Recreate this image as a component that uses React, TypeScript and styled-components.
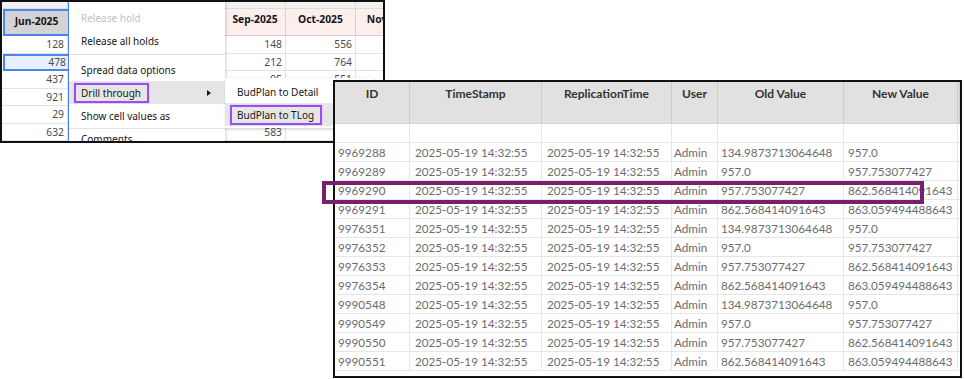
import React from 'react';
import styled, { createGlobalStyle, css } from 'styled-components';

const Global = createGlobalStyle`
  html, body { margin: 0; padding: 0; background: #fff; }
  body { width: 965px; height: 379px; overflow: hidden; }
`;

const Canvas = styled.div`
  position: relative;
  width: 965px;
  height: 379px;
  background: #fff;
  overflow: hidden;
`;

/* ---------- Spreadsheet window (top-left) ---------- */

const SheetWindow = styled.div`
  position: absolute;
  left: 0;
  top: 0;
  width: 385px;
  height: 143px;
  box-sizing: border-box;
  border: 2px solid #111;
  background: #fff;
  overflow: hidden;
  font-family: "Noto Sans", "Open Sans", sans-serif;
`;

const SheetGrid = styled.div`
  display: grid;
  grid-template-columns: 66px 157px 61px 70px 70px;
  grid-template-rows: 7px 27px repeat(6, 17.5px);
`;

const TopStrip = styled.div`
  background: #f1f1f1;
  border-right: 1px solid #dedede;
  border-bottom: 1px solid #dcdcdc;
  box-sizing: border-box;
`;

const HeaderCell = styled.div<{ $selected?: boolean }>`
  box-sizing: border-box;
  display: flex;
  justify-content: center;
  padding-top: 3px;
  font-size: 10.3px;
  font-weight: 700;
  color: #161616;
  white-space: nowrap;
  overflow: hidden;
  ${(p) =>
    p.$selected
      ? css`
          margin-left: 1px;
          background: #d3d3d3;
          border: 2px solid #4a84ee;
          border-right: none;
        `
      : css`
          background: #fdeeee;
          border-right: 1px solid #d6cfcf;
          border-bottom: 1px solid #d6cfcf;
        `}
`;

const NumCell = styled.div<{ $selected?: boolean }>`
  box-sizing: border-box;
  display: flex;
  align-items: center;
  justify-content: flex-end;
  padding-right: 3px;
  font-size: 10.3px;
  color: #4b4b4b;
  border-bottom: 1px solid #e3e3e3;
  border-right: 1px solid #e3e3e3;
  ${(p) =>
    p.$selected &&
    css`
      margin-left: 1px;
      padding-right: 2px;
      background: #e9f0fd;
      border: 2px solid #4a84ee;
      border-right: none;
    `}
`;

const SelectionBand = styled.div`
  grid-column: 2;
  grid-row: 1 / -1;
  border-left: 1px solid #4a84ee;
  border-right: 1px solid #4a84ee;
  box-sizing: border-box;
`;

const ContextMenu = styled.div`
  position: absolute;
  left: 67px;
  top: -2px;
  width: 156px;
  bottom: -20px;
  background: #fff;
  padding-top: 6px;
  box-sizing: border-box;
  box-shadow: 1px 0 3px rgba(0, 0, 0, 0.18);
  display: flex;
  flex-direction: column;
`;

const MenuItem = styled.div<{ $disabled?: boolean; $active?: boolean }>`
  height: 23px;
  flex: none;
  display: flex;
  align-items: center;
  justify-content: space-between;
  padding: 0 12px 0 12px;
  font-size: 10px;
  color: ${(p) => (p.$disabled ? '#c2c2c2' : '#161616')};
  background: ${(p) => (p.$active ? '#e6e6e6' : 'transparent')};
  white-space: nowrap;
`;

const MenuSeparator = styled.div<{ $tight?: boolean }>`
  height: 1px;
  flex: none;
  margin: ${(p) => (p.$tight ? '1px 0 -2px' : '2px 0 3px')};
  background: #e2e2e2;
`;

const Annotated = styled.span`
  margin-left: -7px;
  padding: 0 6px 0 5px;
  height: 16px;
  line-height: 16px;
  border: 2px solid #9a4cf5;
  box-shadow: 0 0 1px rgba(154, 76, 245, 0.5);
`;

const Arrow = styled.span`
  width: 0;
  height: 0;
  margin-right: 2px;
  border-top: 3px solid transparent;
  border-bottom: 3px solid transparent;
  border-left: 4px solid #161616;
`;

const SubMenu = styled.div`
  position: absolute;
  left: 223px;
  top: 76px;
  width: 148px;
  padding: 2px 0 2px;
  background: #fff;
  box-shadow: 1px 1px 3px rgba(0, 0, 0, 0.22);
  display: flex;
  flex-direction: column;
`;

/* ---------- Transaction log table (bottom-right) ---------- */

const TableWindow = styled.div`
  position: absolute;
  left: 333px;
  top: 80px;
  width: 629px;
  height: 298px;
  box-sizing: border-box;
  border: 2px solid #111;
  background: #fff;
  overflow: hidden;
  font-family: Lato, "Liberation Sans", sans-serif;
`;

const LogGrid = styled.div`
  display: grid;
  grid-template-columns: 75px 132px 130px 46px 126px 114px 2px;
  grid-template-rows: 42px 19px;
  grid-auto-rows: 19px;
`;

const LogHead = styled.div`
  box-sizing: border-box;
  background: #e1e1e1;
  border-right: 1px solid #cdcdcd;
  border-bottom: 1px solid #d4d4d4;
  padding-top: 4px;
  text-align: center;
  font-size: 12px;
  font-weight: 700;
  color: #333;
  white-space: nowrap;
`;

const LogCell = styled.div<{ $pad?: number }>`
  box-sizing: border-box;
  border-right: 1px solid #e6e6e6;
  border-bottom: 1px solid #e6e6e6;
  padding-left: ${(p) => p.$pad ?? 4}px;
  display: flex;
  align-items: center;
  font-size: 11.7px;
  color: #6c6c6c;
  white-space: nowrap;
  overflow: hidden;
`;

const RowHighlight = styled.div`
  position: absolute;
  left: 322px;
  top: 181px;
  width: 602px;
  height: 23px;
  box-sizing: border-box;
  border: 4px solid #78206e;
  pointer-events: none;
`;

const junValues = ['128', '478', '437', '921', '29', '632'];
const sepValues = ['148', '212', '95', '412', '318', '583'];
const octValues = ['556', '764', '551', '', '', ''];

const logColumns = ['ID', 'TimeStamp', 'ReplicationTime', 'User', 'Old Value', 'New Value'];
const pads = [3, 5, 5, 2, 3, 4];

const valuePairs: [string, string][] = [
  ['134.9873713064648', '957.0'],
  ['957.0', '957.753077427'],
  ['957.753077427', '862.568414091643'],
  ['862.568414091643', '863.059494488643'],
];

const ids = [
  '9969288', '9969289', '9969290', '9969291',
  '9976351', '9976352', '9976353', '9976354',
  '9990548', '9990549', '9990550', '9990551',
];

export default function App() {
  return (
    <>
      <Global />
      <Canvas>
        <SheetWindow>
          <SheetGrid>
            <TopStrip />
            <SelectionBand />
            <TopStrip />
            <TopStrip />
            <TopStrip />

            <HeaderCell $selected>Jun-2025</HeaderCell>
            <HeaderCell>Sep-2025</HeaderCell>
            <HeaderCell>Oct-2025</HeaderCell>
            <HeaderCell>Nov-2025</HeaderCell>

            {junValues.map((v, i) => (
              <React.Fragment key={i}>
                <NumCell $selected={i === 1}>{v}</NumCell>
                <NumCell>{sepValues[i]}</NumCell>
                <NumCell>{octValues[i]}</NumCell>
                <NumCell />
              </React.Fragment>
            ))}
          </SheetGrid>

          <ContextMenu>
            <MenuItem $disabled>Release hold</MenuItem>
            <MenuItem>Release all holds</MenuItem>
            <MenuSeparator />
            <MenuItem>Spread data options</MenuItem>
            <MenuItem $active>
              <Annotated>Drill through</Annotated>
              <Arrow />
            </MenuItem>
            <MenuItem>Show cell values as</MenuItem>
            <MenuSeparator $tight />
            <MenuItem>Comments</MenuItem>
          </ContextMenu>

          <SubMenu>
            <MenuItem>BudPlan to Detail</MenuItem>
            <MenuItem $active>
              <Annotated>BudPlan to TLog</Annotated>
            </MenuItem>
          </SubMenu>
        </SheetWindow>

        <TableWindow>
          <LogGrid>
            {logColumns.map((c) => (
              <LogHead key={c}>{c}</LogHead>
            ))}
            <LogHead />
            {logColumns.map((c) => (
              <LogCell key={'e' + c} />
            ))}
            <LogCell />
            {ids.map((id, i) => {
              const [oldV, newV] = valuePairs[i % 4];
              const cells = [id, '2025-05-19 14:32:55', '2025-05-19 14:32:55', 'Admin', oldV, newV];
              return (
                <React.Fragment key={id}>
                  {cells.map((t, j) => (
                    <LogCell key={j} $pad={pads[j]}>
                      {t}
                    </LogCell>
                  ))}
                  <LogCell />
                </React.Fragment>
              );
            })}
          </LogGrid>
        </TableWindow>

        <RowHighlight />
      </Canvas>
    </>
  );
}
